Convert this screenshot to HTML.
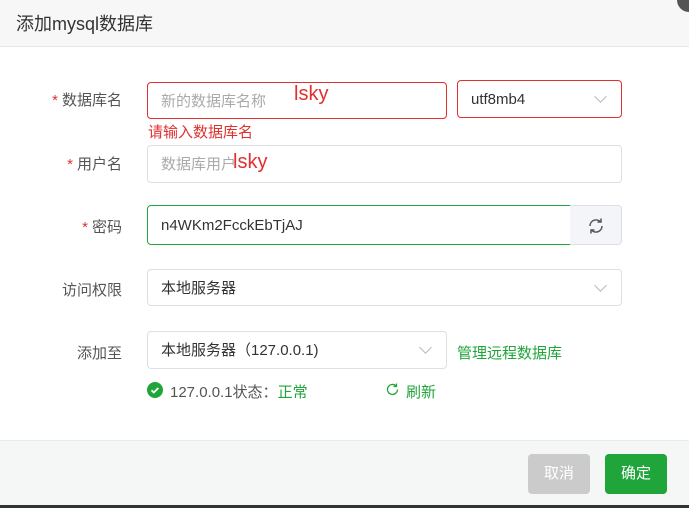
<!DOCTYPE html>
<html><head><meta charset="utf-8"><style>
*{box-sizing:border-box;margin:0;padding:0}
body{width:689px;height:508px;background:#fff;font-family:"Liberation Sans","Noto Sans CJK SC",sans-serif;font-size:15px;color:#333;position:relative;overflow:hidden}
.a{position:absolute}
.hd{left:0;top:0;width:689px;height:47px;background:#f7f7f7;border-bottom:1px solid #e6e6e6}
.hd span{position:absolute;left:16px;top:10px;font-size:18px;color:#333}
.lbl{font-size:15px;color:#555;text-align:right;width:122px;left:0}
.lbl i{color:#e0302f;font-style:normal;margin-right:4px}
.in{border:1px solid #dcdfe6;border-radius:4px;background:#fff;height:38px;padding-left:13px;line-height:38px;font-size:15px;color:#555}
.ch{position:absolute;right:16px;top:11px;width:9px;height:9px;border-right:1px solid #bbb;border-bottom:1px solid #bbb;transform:rotate(45deg)}
.ft{left:0;top:440px;width:689px;height:66px;background:#f5f6f6;border-top:1px solid #eaeaea}
.btn{border-radius:4px;color:#fff;font-size:15px;text-align:center;line-height:40px;width:62px;height:40px}
</style></head><body>
<div class="a hd"><span>添加mysql数据库</span></div>
<div class="a" style="right:0;top:0;width:12px;height:12px;background:#555;border-radius:0 0 0 12px"></div>

<div class="a lbl" style="top:89px"><i>*</i>数据库名</div>
<div class="a in" style="left:147px;top:82px;width:300px;height:37px;border-color:#e0302f;color:#aaa">新的数据库名称</div>
<div class="a" style="left:294px;top:83px;font-size:20px;color:#e0302f">lsky</div>
<div class="a in" style="left:457px;top:80px;width:165px;border-color:#e0302f;color:#333">utf8mb4<div class="ch"></div></div>
<div class="a" style="left:148px;top:121px;font-size:15px;color:#e0302f">请输入数据库名</div>

<div class="a lbl" style="top:153px"><i>*</i>用户名</div>
<div class="a in" style="left:147px;top:145px;width:475px;color:#aaa">数据库用户</div>
<div class="a" style="left:233px;top:151px;font-size:20px;color:#e0302f">lsky</div>

<div class="a lbl" style="top:216px"><i>*</i>密码</div>
<div class="a in" style="left:147px;top:205px;width:424px;height:40px;line-height:39px;border-color:#20a53a;border-radius:4px 0 0 4px;color:#333">n4WKm2FcckEbTjAJ</div>
<div class="a" style="left:570px;top:205px;width:52px;height:40px;background:#f4f5f9;border:1px solid #dcdfe6;border-left:none;border-radius:0 4px 4px 0">
<svg width="18" height="18" viewBox="0 0 18 18" style="position:absolute;left:17px;top:11px" fill="none" stroke="#555" stroke-width="1.5"><path d="M3 9a6 6 0 0 1 10.5-4M15 9a6 6 0 0 1-10.5 4"/><path d="M14 1.5v3.5h-3.5M4 16.5v-3.5h3.5"/></svg></div>

<div class="a lbl" style="top:279px">访问权限</div>
<div class="a in" style="left:147px;top:269px;width:475px;height:37px;color:#333">本地服务器<div class="ch"></div></div>

<div class="a lbl" style="top:342px">添加至</div>
<div class="a in" style="left:147px;top:331px;width:300px;height:38px;color:#333">本地服务器（127.0.0.1)<div class="ch"></div></div>
<div class="a" style="left:457px;top:342px;color:#20a53a">管理远程数据库</div>

<div class="a" style="left:147px;top:382px;width:16px;height:16px;border-radius:50%;background:#20a53a"><svg width="16" height="16" style="position:absolute;left:0;top:0"><path d="M4.5 8.3l2.3 2.2 4.5-4.5" stroke="#fff" stroke-width="1.8" fill="none"/></svg></div>
<div class="a" style="left:170px;top:381px;color:#555">127.0.0.1状态：<span style="color:#20a53a">正常</span></div>
<svg class="a" style="left:385px;top:382px" width="15" height="15" viewBox="0 0 15 15" fill="none" stroke="#20a53a" stroke-width="1.3"><path d="M12.5 7.5a5 5 0 1 1-1.5-3.6"/><path d="M11.5 1.5v3h-3"/></svg>
<div class="a" style="left:406px;top:381px;color:#20a53a">刷新</div>

<div class="a ft"></div>
<div class="a btn" style="left:528px;top:454px;background:#cbcbcb">取消</div>
<div class="a btn" style="left:605px;top:454px;background:#20a53a">确定</div>
<div class="a" style="left:0;top:505px;width:689px;height:3px;background:#333"></div>
</body></html>
